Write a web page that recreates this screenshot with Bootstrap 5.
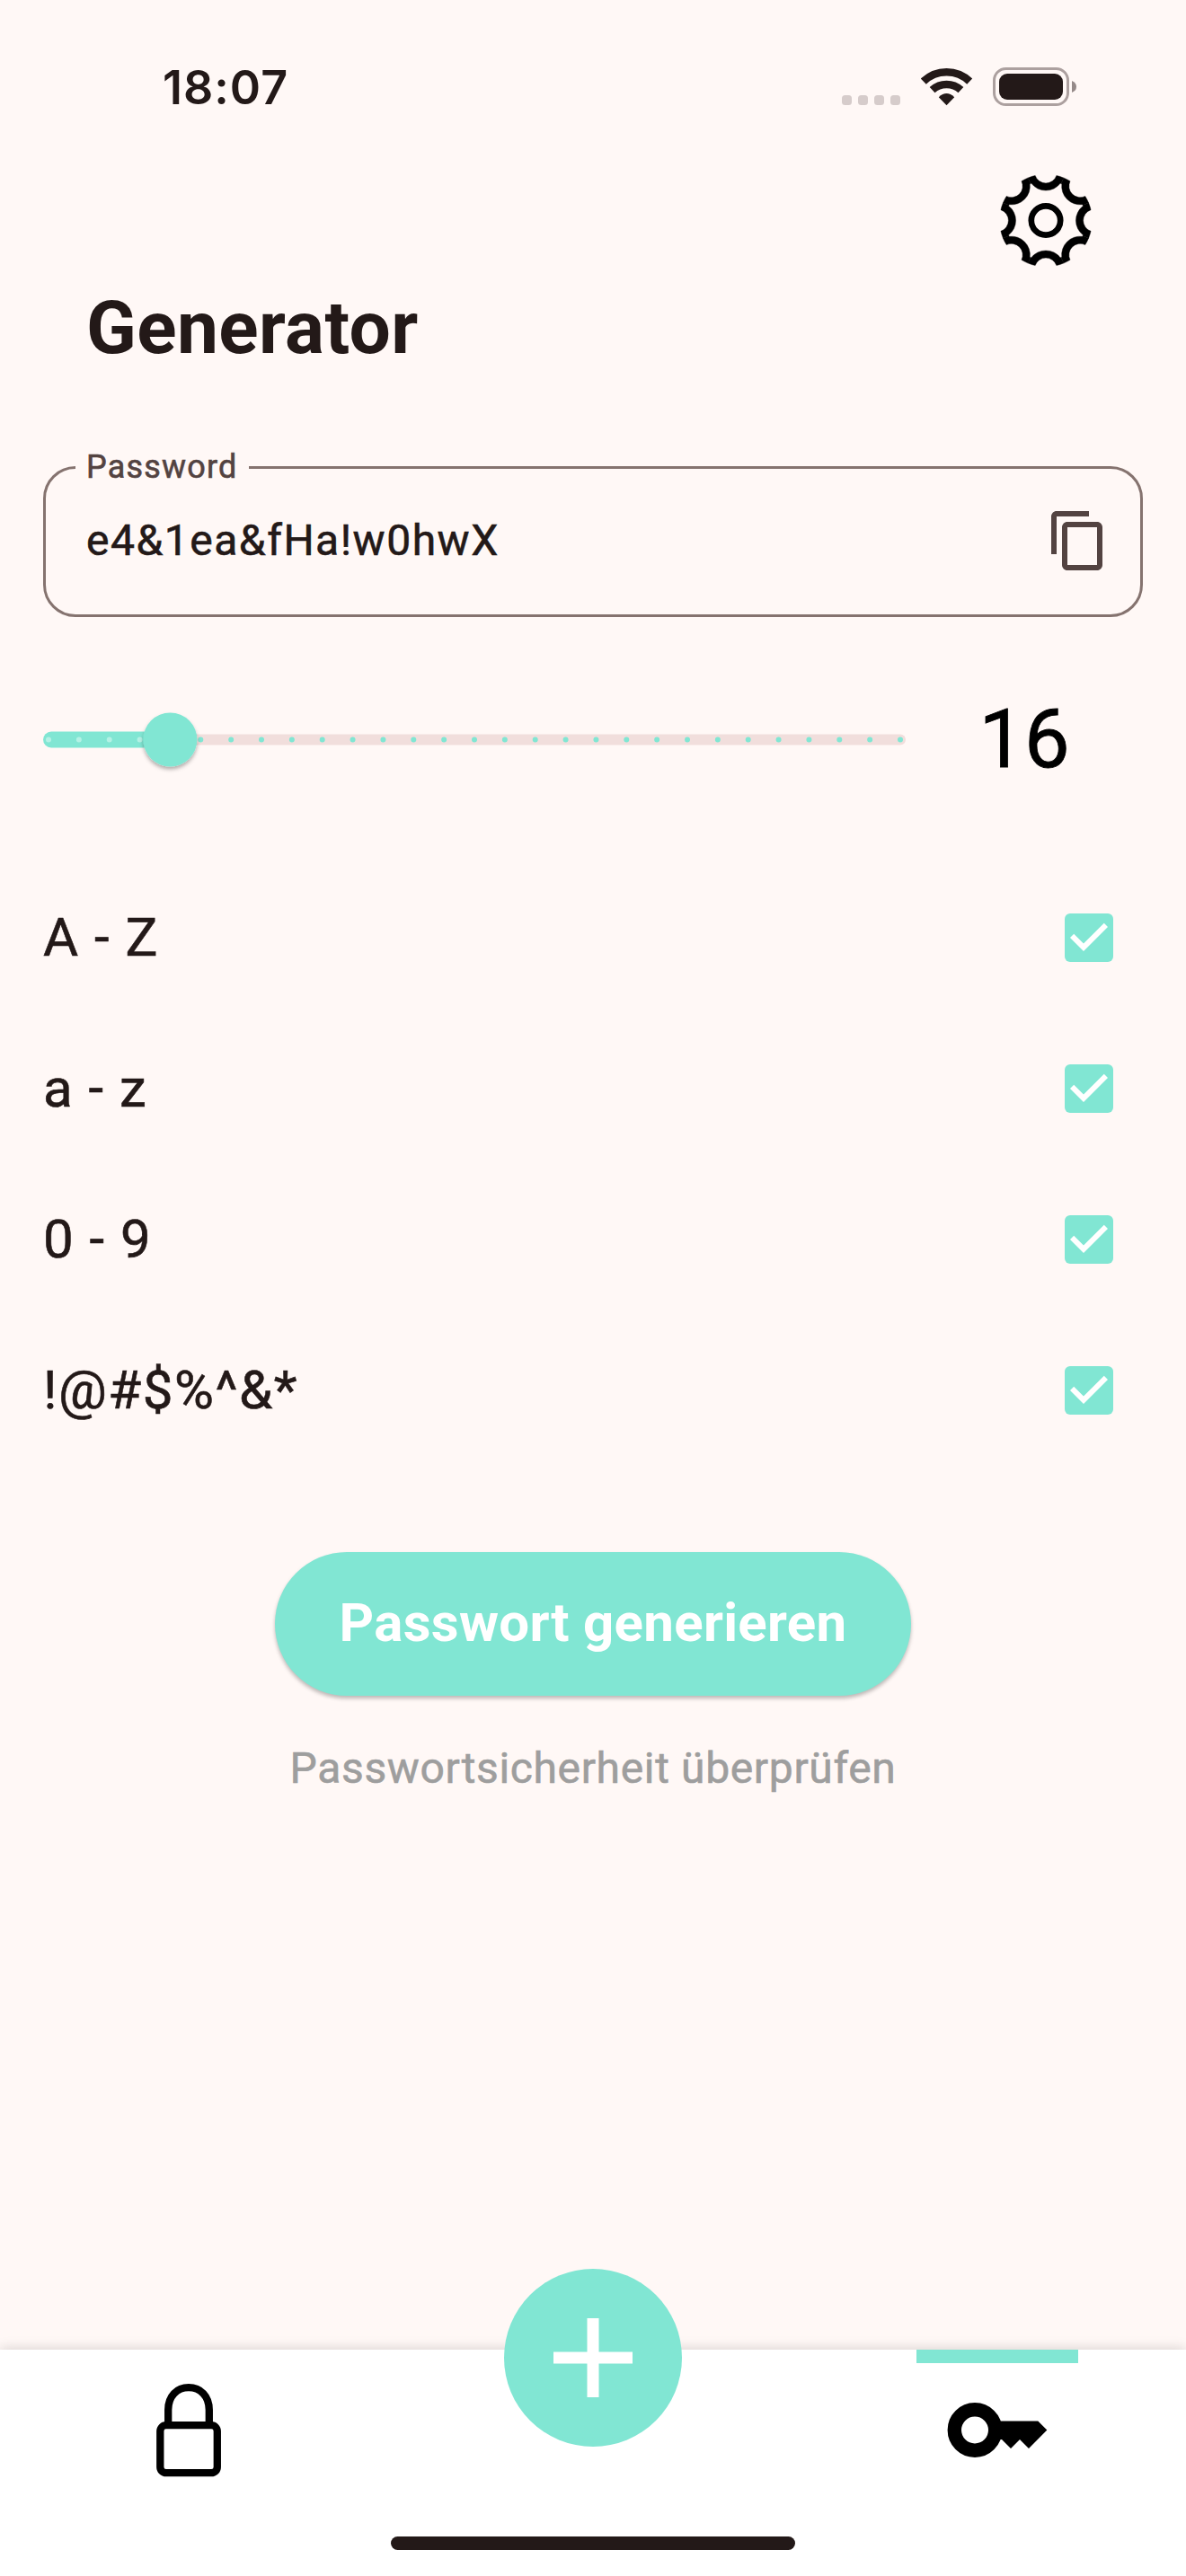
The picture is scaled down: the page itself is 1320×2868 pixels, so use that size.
<!DOCTYPE html>
<html lang="de">
<head>
<meta charset="utf-8">
<meta name="viewport" content="width=device-width, initial-scale=1">
<title>Generator</title>
<link href="https://cdn.jsdelivr.net/npm/bootstrap@5.3.0/dist/css/bootstrap.min.css" rel="stylesheet">
<style>
  :root { --mint: #81e6d3; --ink: #231918; --paper: #fff8f6; }
  body { background: var(--paper); color: var(--ink); font-family: Roboto, "Liberation Sans", sans-serif; }
  svg { display: block; flex: none; }
  .screen { width: 1320px; height: 2868px; overflow: hidden; }
  .status { height: 150px; padding: 68px 121px 0 181px; }
  .clock { font: 600 52px/60px Inter, sans-serif; letter-spacing: 1px; }
  .status-icons { height: 43px; margin-top: 7px; gap: 22px; }
  .settings { height: 167px; padding: 44px 104px 0 0; }
  .page-title { font-size: 82px; line-height: 96px; font-weight: 700; letter-spacing: .4px; padding-left: 96px; }
  .pw-field { margin: 106px 48px 0; height: 168px; border: 3px solid #85736f; border-radius: 36px; padding: 0 33px 3px 45px; }
  .pw-label { left: 33px; top: -22px; padding: 0 12px; background: var(--paper); color: #534341; font-size: 36px; line-height: 40px; letter-spacing: 1.2px; }
  .pw-label, .pw-value, .charset, .check-link { -webkit-text-stroke: .6px currentColor; }
  .pw-value { font-size: 48px; letter-spacing: 1.5px; line-height: 60px; }
  .length-row { margin: 76px 48px 0; height: 121px; }
  .length-value { width: 264px; font-size: 90px; line-height: 120px; color: #000; -webkit-text-stroke: .8px #000; }
  .charsets { margin-top: 76px; padding: 0 81px 0 48px; }
  .charset { height: 168px; font-size: 60px; letter-spacing: 1.5px; }
  .btn-generate { margin-top: 96px; width: 708px; height: 160px; background: var(--mint); color: #fff; font-size: 60px; font-weight: 700; line-height: 1; letter-spacing: .3px; padding: 0 0 3px; box-shadow: 0 3px 4px rgba(0,0,0,.26); }
  .check-link { margin-top: 51px; font-size: 48px; line-height: 60px; letter-spacing: .65px; color: #9e9e9e; }
  .tabbar { height: 252px; background: #fff; box-shadow: 0 0 14px rgba(0,0,0,.18); }
  .tab-items { height: 208px; padding: 0 120px; }
  .tab { width: 180px; height: 100%; }
  .tab-line { width: 180px; height: 15px; }
  .tab-line.on { background: var(--mint); }
  .fab { width: 198px; height: 198px; background: var(--mint); margin-top: -90px; }
  .home-bar { width: 450px; height: 15px; border-radius: 8px; background: var(--ink); }
</style>
</head>
<body>
<div class="screen d-flex flex-column">
  <div class="status d-flex justify-content-between align-items-start">
    <div class="clock">18:07</div>
    <div class="status-icons d-flex align-items-end">
      <svg width="66" height="43" viewBox="0 0 66 43" fill="#d6cccb"><rect x="0" y="31" width="11" height="11" rx="3.5"/><rect x="18" y="31" width="11" height="11" rx="3.5"/><rect x="36" y="31" width="11" height="11" rx="3.5"/><rect x="54" y="31" width="11" height="11" rx="3.5"/></svg>
      <svg width="58" height="43" viewBox="1025 75 58 43">
        <g fill="none" stroke="#231918" stroke-width="8.6"><path d="M1027.8 90.6A37 37 0 0 1 1079.2 90.6"/><path d="M1037.6 100.2A23.5 23.5 0 0 1 1069.4 100.2"/></g>
        <path fill="#231918" d="M1053.5 117.2L1044.8 108.3Q1053.5 99.900 1062.2 108.3Z"/>
      </svg>
      <svg width="94" height="43" viewBox="1105 75 94 43">
        <rect x="1106.5" y="76.5" width="82" height="40" rx="13" fill="none" stroke="#aca09f" stroke-width="3"/>
        <rect x="1112" y="82" width="71" height="29" rx="9" fill="#231918"/>
        <path d="M1193 90q5 2 5 6.500t-5 6.500z" fill="#958a89"/>
      </svg>
    </div>
  </div>

  <div class="settings d-flex justify-content-end align-items-start">
    <svg width="104" height="104" viewBox="-52 -51.500 104 104">
      <defs><path id="tooth" stroke="#000" stroke-width=".4" d="M-19.710-47.580A51.500 51.500 0 0 1-11.850-50.120A12.500 12.500 0 0 0 11.850-50.120A51.500 51.500 0 0 1 19.710-47.580L17.030-41.110A44.500 44.500 0 0 0 16.240-41.430A20.500 20.500 0 0 1-16.240-41.430A44.500 44.500 0 0 0-17.030-41.110Z"/></defs>
      <use href="#tooth"/><use href="#tooth" transform="rotate(45)"/><use href="#tooth" transform="rotate(90)"/><use href="#tooth" transform="rotate(135)"/><use href="#tooth" transform="rotate(180)"/><use href="#tooth" transform="rotate(225)"/><use href="#tooth" transform="rotate(270)"/><use href="#tooth" transform="rotate(315)"/>
      <circle r="16.200" fill="none" stroke="#000" stroke-width="6.700"/>
    </svg>
  </div>
  <h1 class="page-title m-0">Generator</h1>

  <div class="pw-field position-relative d-flex justify-content-between align-items-center">
    <span class="pw-label position-absolute">Password</span>
    <span class="pw-value">e4&amp;1ea&amp;fHa!w0hwX</span>
    <svg width="72" height="72" viewBox="0 0 24 24" fill="#534341"><path d="M16 1H4c-1.100 0-2 .9-2 2v14h2V3h12V1zm3 4H8c-1.100 0-2 .9-2 2v14c0 1.100.9 2 2 2h11c1.100 0 2-.9 2-2V7c0-1.100-.9-2-2-2zm0 16H8V7h11v14z"/></svg>
  </div>

  <div class="length-row d-flex align-items-center">
    <svg width="960" height="121" viewBox="0 0 960 121">
      <defs><filter id="lift" x="-30%" y="-30%" width="160%" height="170%"><feDropShadow dx="0" dy="3" stdDeviation="2" flood-opacity=".3"/></filter></defs>
      <rect x="120" y="54.500" width="840" height="12" rx="6" fill="#f1dedc"/>
      <path d="M175.290 60.500H955" stroke="#81e6d3" stroke-width="6" stroke-linecap="round" stroke-dasharray="0 33.857"/>
      <rect x="0" y="51.500" width="142" height="18" rx="9" fill="#81e6d3"/>
      <path d="M6 60.500H110" stroke="#b4f1e5" stroke-width="6" stroke-linecap="round" stroke-dasharray="0 33.857"/>
      <circle cx="141.400" cy="60.500" r="30" fill="#81e6d3" filter="url(#lift)"/>
    </svg>
    <div class="length-value text-center"><span>16</span></div>
  </div>

  <div class="charsets">
    <svg class="d-none"><symbol id="checked" viewBox="3 3 18 18"><rect x="3" y="3" width="18" height="18" rx="2" fill="#81e6d3"/><path fill="#fff" d="M10 17l-5-5 1.410-1.410L10 14.170l7.590-7.590L19 8l-9 9z"/></symbol></svg>
    <div class="charset d-flex justify-content-between align-items-center"><span>A - Z</span><svg width="54" height="54"><use href="#checked"/></svg></div>
    <div class="charset d-flex justify-content-between align-items-center"><span>a - z</span><svg width="54" height="54"><use href="#checked"/></svg></div>
    <div class="charset d-flex justify-content-between align-items-center"><span>0 - 9</span><svg width="54" height="54"><use href="#checked"/></svg></div>
    <div class="charset d-flex justify-content-between align-items-center"><span>!@#$%^&amp;*</span><svg width="54" height="54"><use href="#checked"/></svg></div>
  </div>

  <button type="button" class="btn btn-generate rounded-pill border-0 align-self-center">Passwort generieren</button>
  <div class="check-link text-center">Passwortsicherheit überprüfen</div>

  <div class="tabbar mt-auto d-flex flex-column align-items-center">
    <div class="tab-items w-100 d-flex justify-content-between align-items-start">
      <div class="tab d-flex flex-column align-items-center">
        <div class="tab-line"></div>
        <svg width="180" height="140" viewBox="120 2631 180 140" fill="none" stroke="#000" stroke-width="8.300">
          <rect x="178.300" y="2700.200" width="63.500" height="53" rx="6.500"/>
          <path d="M187.200 2700V2683C187.200 2667.500 197 2658.200 210 2658.200S232.800 2667.500 232.800 2683V2700"/>
        </svg>
      </div>
      <div class="fab rounded-circle d-flex align-items-center justify-content-center">
        <svg width="88" height="88" viewBox="0 0 88 88" fill="#fff"><path d="M37.500 0h13v37.500H88v13H50.500V88h-13V50.500H0v-13h37.500z"/></svg>
      </div>
      <div class="tab d-flex flex-column align-items-center">
        <div class="tab-line on"></div>
        <svg width="180" height="140" viewBox="1020 2631 180 140">
          <circle cx="1085" cy="2705.500" r="22.700" fill="none" stroke="#000" stroke-width="15.400"/>
          <path d="M1105 2695.500H1155.300L1165.300 2705.500L1145 2726L1135 2716L1125 2726L1115 2716H1105Z"/>
        </svg>
      </div>
    </div>
    <div class="home-bar"></div>
  </div>
</div>
<script src="https://cdn.jsdelivr.net/npm/bootstrap@5.3.0/dist/js/bootstrap.bundle.min.js"></script>
</body>
</html>
